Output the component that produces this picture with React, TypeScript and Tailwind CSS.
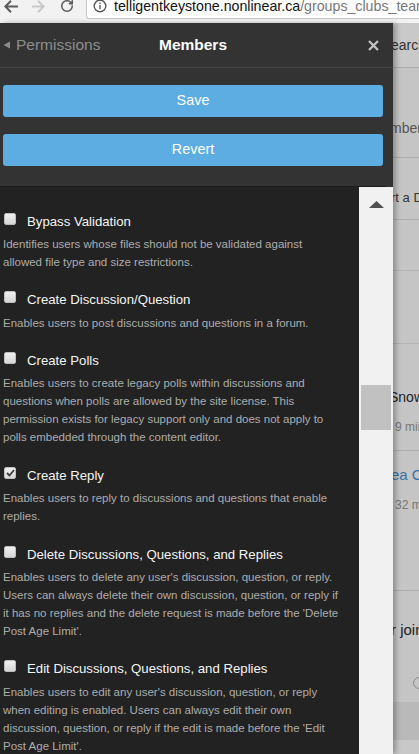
import { RotateCw } from "lucide-react";

const permissions = [
  {
    title: "Bypass Validation",
    desc: "Identifies users whose files should not be validated against allowed file type and size restrictions.",
    checked: false,
  },
  {
    title: "Create Discussion/Question",
    desc: "Enables users to post discussions and questions in a forum.",
    checked: false,
  },
  {
    title: "Create Polls",
    desc: "Enables users to create legacy polls within discussions and questions when polls are allowed by the site license. This permission exists for legacy support only and does not apply to polls embedded through the content editor.",
    checked: false,
  },
  {
    title: "Create Reply",
    desc: "Enables users to reply to discussions and questions that enable replies.",
    checked: true,
  },
  {
    title: "Delete Discussions, Questions, and Replies",
    desc: "Enables users to delete any user's discussion, question, or reply. Users can always delete their own discussion, question, or reply if it has no replies and the delete request is made before the 'Delete Post Age Limit'.",
    checked: false,
  },
  {
    title: "Edit Discussions, Questions, and Replies",
    desc: "Enables users to edit any user's discussion, question, or reply when editing is enabled. Users can always edit their own discussion, question, or reply if the edit is made before the 'Edit Post Age Limit'.",
    checked: false,
  },
];

function Checkbox({ checked }: { checked: boolean }) {
  return (
    <span className="mt-[1px] ml-[1px] w-[12px] h-[12px] shrink-0 rounded-[2px] border border-[#bdbdbd] bg-gradient-to-b from-[#f0f0f0] to-[#d6d6d6] flex items-center justify-center">
      {checked && (
        <svg width="9" height="8" viewBox="0 0 9 8">
          <polyline points="1,4 3.5,6.5 8,1" fill="none" stroke="#3a3a3a" strokeWidth="1.8" />
        </svg>
      )}
    </span>
  );
}

function BrowserBar() {
  return (
    <div className="h-[23px] shrink-0 bg-[#f2f2f2] flex items-start overflow-hidden">
      {/* back */}
      <svg className="ml-[4px]" width="14" height="13" viewBox="0 0 14 13">
        <path d="M7 0.8 L1.3 6.5 L7 12.2 M1.3 6.5 H14" fill="none" stroke="#5a5a5a" strokeWidth="2" />
      </svg>
      {/* forward */}
      <svg className="ml-[14px]" width="13" height="13" viewBox="0 0 13 13">
        <path d="M6 0.8 L11.7 6.5 L6 12.2 M11.7 6.5 H0" fill="none" stroke="#c9c9c9" strokeWidth="2" />
      </svg>
      {/* reload */}
      <RotateCw className="ml-[15px] -mt-[1px]" size={14} strokeWidth={2.6} color="#5a5a5a" />
      {/* omnibox */}
      <div className="ml-[12px] flex-1 h-[19px] bg-white border border-t-0 border-r-0 border-[#c8c8c8] rounded-bl-[3px] flex items-start pl-[6px] overflow-hidden">
        <svg className="-mt-[1.5px] shrink-0" width="14" height="14" viewBox="0 0 14 14">
          <circle cx="7" cy="7" r="5.8" fill="none" stroke="#5a5a5a" strokeWidth="1.4" />
          <rect x="6.3" y="6" width="1.4" height="4.2" fill="#5a5a5a" />
          <rect x="6.3" y="3.6" width="1.4" height="1.4" fill="#5a5a5a" />
        </svg>
        <span className="ml-[7px] -mt-[1.5px] text-[14.2px] leading-[14px] whitespace-nowrap text-[#111]">
          telligentkeystone.nonlinear.ca
          <span className="text-[#777]">/groups_clubs_team</span>
        </span>
      </div>
    </div>
  );
}

function BackgroundPage() {
  return (
    <div className="flex-1 bg-[#c5c5c5] flex flex-col overflow-hidden whitespace-nowrap">
      <div className="h-[45px] shrink-0 bg-[#c9c9c9] border-b border-[#acacac] text-[14px] leading-[44px] text-[#333] -ml-[2px]">
        earch
      </div>
      <div className="h-[90px] shrink-0 border-b border-[#adadad] pt-[51px] text-[14px] leading-[18px] text-[#555] -ml-[3px]">
        mbers
      </div>
      <div className="h-[62px] shrink-0 border-b border-[#adadad] pt-[31px] text-[13px] leading-[18px] text-[#333] -ml-[2px]">
        rt a D
      </div>
      <div className="h-[51px] shrink-0 border-b border-[#b2b2b2]" />
      <div className="h-[73px] shrink-0 border-b border-[#b2b2b2]" />
      <div className="h-[107px] shrink-0 border-b border-[#adadad] pt-[44px] flex flex-col">
        <span className="-ml-[4px] text-[14px] leading-[18px] text-[#222]">Snow</span>
        <span className="mt-[12px] pl-[2px] text-[12px] leading-[18px] text-[#777]">9 min</span>
      </div>
      <div className="h-[140px] shrink-0 border-b border-[#adadad] pt-[15px] flex flex-col">
        <span className="-ml-[2px] text-[15px] leading-[18px] text-[#3a72a8]">ea Cl</span>
        <span className="mt-[12px] pl-[2px] text-[12px] leading-[18px] text-[#777]">32 m</span>
      </div>
      <div className="h-[111px] shrink-0 pt-[30px] flex flex-col">
        <span className="-ml-[2px] text-[15px] leading-[18px] text-[#222]">r join</span>
        <span className="mt-[38px] ml-[20px] w-[12px] h-[12px] rounded-full border-[1.5px] border-[#8a8a8a]" />
      </div>
      <div className="h-[38px] shrink-0 bg-[#b9b9b9]" />
      <div className="flex-1 bg-[#c8c8c8]" />
    </div>
  );
}

export default function App() {
  return (
    <div className="w-[419px] h-[754px] overflow-hidden flex flex-col font-['Liberation_Sans',Arial,sans-serif]">
      <BrowserBar />

      <div className="flex flex-1 min-h-0">
        {/* ── Members panel ───────────────────────────── */}
        <div className="w-[393px] shrink-0 bg-[#333333] flex flex-col relative z-10 shadow-[3px_0_5px_rgba(0,0,0,0.28)]">
          {/* Header */}
          <div className="h-[45px] shrink-0 border-b border-[#454545] grid items-center">
            <div className="col-start-1 row-start-1 flex items-center pl-[3px]">
              <svg width="7" height="8" viewBox="0 0 7 8">
                <polygon points="7,0.5 7,7.5 0.5,4" fill="#8d8d8d" />
              </svg>
              <span className="ml-[6px] text-[15.5px] leading-[20px] text-[#8d8d8d]">Permissions</span>
            </div>
            <div className="col-start-1 row-start-1 text-center pr-[7px] text-[15.5px] leading-[20px] font-bold text-white">
              Members
            </div>
            <div className="col-start-1 row-start-1 justify-self-end mr-[14px] flex">
              <svg width="11" height="11" viewBox="0 0 11 11">
                <path d="M1 1 L10 10 M10 1 L1 10" stroke="#c4c4c4" strokeWidth="2.3" />
              </svg>
            </div>
          </div>

          {/* Actions */}
          <div className="shrink-0 pt-[17px] pb-[20px] px-[3px] flex flex-col gap-[17px] border-b border-[#1c1c1c] w-[386px]">
            <button className="h-[32px] w-[380px] rounded-[3px] bg-[#5dade2] text-white text-[14.4px]">
              Save
            </button>
            <button className="h-[32px] w-[380px] rounded-[3px] bg-[#5dade2] text-white text-[14.4px]">
              Revert
            </button>
          </div>

          {/* Permission list + scrollbar */}
          <div className="flex flex-1 min-h-0">
            <div className="w-[359px] shrink-0 bg-[#222222] overflow-hidden pt-[24.5px] pl-[3px] flex flex-col gap-[19.5px]">
              {permissions.map((p) => (
                <div key={p.title} className="flex flex-col">
                  <div className="h-[20px] flex items-start">
                    <Checkbox checked={p.checked} />
                    <span className="ml-[11px] text-[13.2px] leading-[20px] text-[#f6f6f6] whitespace-nowrap">
                      {p.title}
                    </span>
                  </div>
                  <p className="mt-[3.3px] w-[338px] text-[11.5px] leading-[18px] text-[#adadad]">{p.desc}</p>
                </div>
              ))}
            </div>
            <div className="w-[34px] shrink-0 bg-[#f1f1f1] flex flex-col items-center pt-[14px]">
              <svg width="15" height="7" viewBox="0 0 15 7">
                <polygon points="7.5,0 15,7 0,7" fill="#505050" />
              </svg>
              <div className="mt-[177px] w-[30px] h-[45px] bg-[#c1c1c1]" />
            </div>
          </div>
        </div>

        {/* ── Page behind the panel ───────────────────── */}
        <BackgroundPage />
      </div>
    </div>
  );
}
